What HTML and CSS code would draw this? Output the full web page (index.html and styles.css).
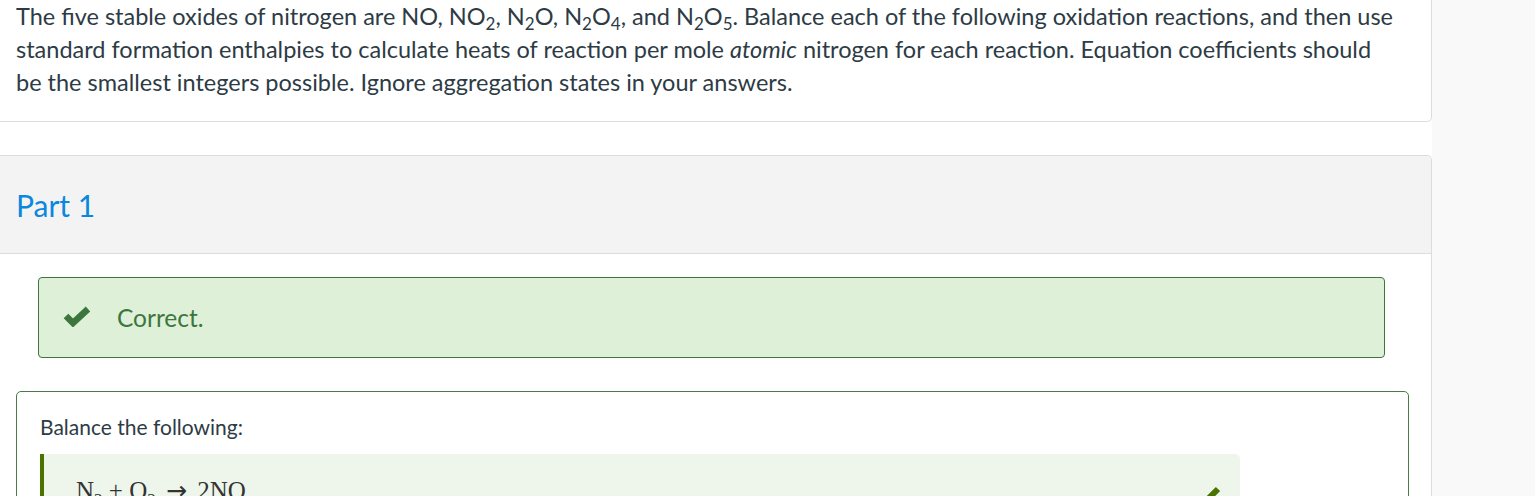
FILE: index.html
```html
<!DOCTYPE html>
<html>
<head>
<meta charset="utf-8">
<link rel="stylesheet" href="styles.css">
</head>
<body>
<div class="page">
  <main class="main">
    <section class="question">
      <p class="intro">The five stable oxides of nitrogen are NO, NO<sub>2</sub>, N<sub>2</sub>O, N<sub>2</sub>O<sub>4</sub>, and N<sub>2</sub>O<sub>5</sub>. Balance each of the following oxidation reactions, and then use standard formation enthalpies to calculate heats of reaction per mole <em>atomic</em> nitrogen for each reaction. Equation coefficients should be the smallest integers possible. Ignore aggregation states in your answers.</p>
    </section>
    <section class="part">
      <header class="part-head"><h2 class="part-title">Part 1</h2></header>
      <div class="part-body">
        <div class="alert">
          <svg class="alert-icon" width="30" height="22" viewBox="0 0 30 22"><polyline points="4,11 11,18 26,4" fill="none" stroke="#3c763d" stroke-width="6.5" stroke-linejoin="miter" stroke-linecap="butt"/></svg>
          <span class="alert-text">Correct.</span>
        </div>
        <div class="task">
          <p class="task-label">Balance the following:</p>
          <div class="eq-row">
            <span class="eq">N<sub>2</sub> + O<sub>2</sub> <span class="arrow">→</span> 2NO</span>
            <svg class="eq-check" width="34" height="26" viewBox="0 0 34 26"><polyline points="4,16 12,24 30,6" fill="none" stroke="#4a7300" stroke-width="6" stroke-linecap="butt"/></svg>
          </div>
        </div>
      </div>
    </section>
  </main>
  <aside class="gutter"></aside>
</div>
</body>
</html>
```
FILE: styles.css
```css
html, body {
  margin: 0;
  padding: 0;
  background: #f9f9f9;
}
body {
  font-family: Lato, "Liberation Sans", sans-serif;
  color: #2d3b45;
  overflow: hidden;
}
.page {
  display: flex;
  height: 496px;
}
.main {
  width: 1432px;
  flex: none;
  background: #fff;
}
.gutter {
  flex: 1;
  background: #f9f9f9;
}
.question {
  border: 1px solid #dcdcdc;
  border-top: none;
  border-left: none;
  border-radius: 0 0 5px 0;
  padding: 0 33px 22px 16px;
}
.intro {
  margin: 0;
  font-size: 23.5px;
  line-height: 33px;
  color: #2d3b45;
}
.intro sub {
  font-size: 17px;
  line-height: 0;
  vertical-align: -5px;
}
.part {
  margin-top: 33px;
  border: 1px solid #dcdcdc;
  border-left: none;
  border-bottom: none;
  border-radius: 0 5px 0 0;
  height: 400px;
}
.part-head {
  background: #f3f3f3;
  border-bottom: 1px solid #dcdcdc;
  border-radius: 0 5px 0 0;
  height: 97px;
  display: flex;
  align-items: center;
  padding-left: 16px;
}
.part-title {
  margin: 0;
  font-weight: 400;
  font-size: 30px;
  color: #0b87dc;
}
.part-body {
  padding: 23px 22px 0 16px;
}
.alert {
  margin-left: 22px;
  margin-right: 24px;
  height: 79px;
  background: #dff0d8;
  border: 1px solid #3c763d;
  border-radius: 4px;
  display: flex;
  align-items: center;
  padding-left: 23px;
}
.alert-icon {
  display: block;
  margin-top: -4px;
}
.alert-text {
  margin-left: 25px;
  font-size: 24.5px;
  color: #3c763d;
}
.task {
  margin-top: 33px;
  border: 1px solid #4a7a45;
  border-radius: 5px;
  padding: 20px 23px 0 23px;
  height: 200px;
}
.task-label {
  margin: 0;
  font-size: 21px;
  line-height: 30px;
  color: #2d3b45;
}
.eq-row {
  margin-top: 12px;
  width: 1200px;
  height: 120px;
  background: #eef6ec;
  border-left: 4px solid #4a7300;
  border-radius: 0 5px 5px 0;
  display: flex;
  justify-content: space-between;
  align-items: flex-start;
  padding: 22px 18px 0 32px;
  box-sizing: border-box;
}
.eq {
  font-family: "Liberation Serif", "DejaVu Serif", serif;
  font-size: 25px;
  color: #333;
  white-space: nowrap;
}
.eq sub {
  font-size: 17px;
}
.arrow {
  font-family: "DejaVu Sans", serif;
  font-size: 25px;
  margin: 0 4px;
}
.eq-check {
  display: block;
  margin-top: 7px;
}
```
